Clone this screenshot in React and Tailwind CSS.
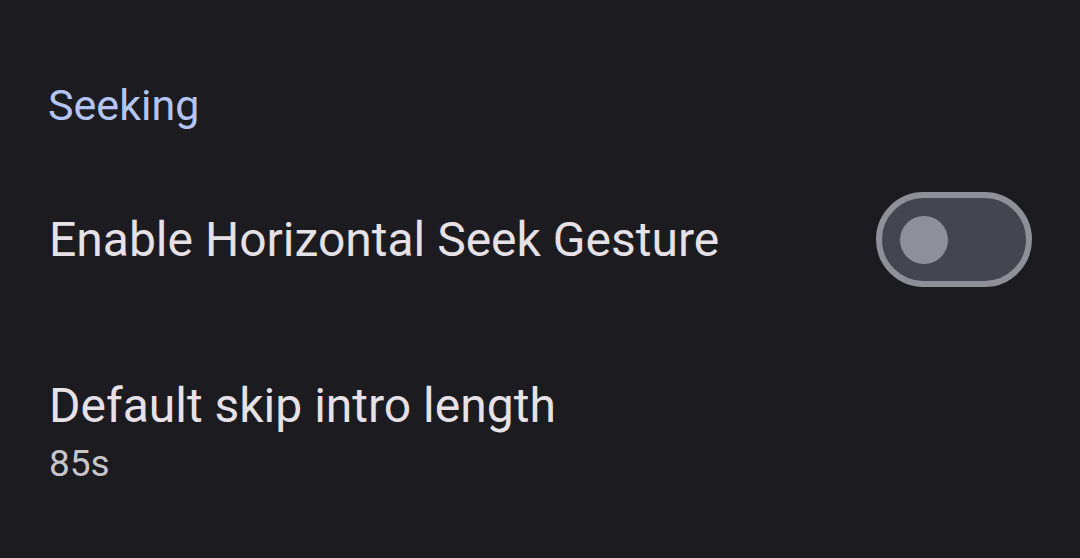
const font = { fontFamily: "Roboto, 'Noto Sans', sans-serif" };

function Toggle({ on = false }) {
  return (
    <div className="w-[156px] h-[95px] rounded-full border-[6px] border-[#8e9099] bg-[#44464f] flex items-center px-[18px] shrink-0">
      <div className="w-[48px] h-[48px] rounded-full bg-[#8e9099]" />
    </div>
  );
}

export default function App() {
  return (
    <div className="w-[1080px] h-[558px] bg-[#1c1b1f] overflow-hidden" style={font}>
      <div className="pl-[48px] pt-[79px]">
        <h2 className="text-[43px] leading-[52px] text-[#b4c5f5]">Seeking</h2>
      </div>

      <div className="flex items-center justify-between pl-[49px] pr-[48px] mt-[61px]">
        <span className="text-[48px] leading-[56px] text-[#e5e1e6]">
          Enable Horizontal Seek Gesture
        </span>
        <Toggle />
      </div>

      <div className="pl-[49px] mt-[91px] flex flex-col">
        <span className="text-[48px] leading-[56px] text-[#e5e1e6]">
          Default skip intro length
        </span>
        <span className="text-[37px] leading-[44px] mt-[8px] text-[#c6c5cc]">85s</span>
      </div>
    </div>
  );
}
